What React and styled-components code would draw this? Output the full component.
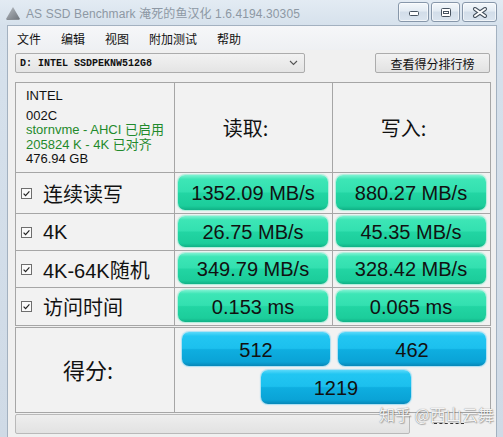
import { Fragment } from "react";
import styled, { createGlobalStyle } from "styled-components";

const Global = createGlobalStyle`
  html, body {
    margin: 0;
    padding: 0;
    background: #cfdbe8;
  }
  * { box-sizing: border-box; }
`;

const UI_FONT = `"Liberation Sans", "Noto Sans CJK SC", sans-serif`;

const Window = styled.div`
  position: relative;
  width: 503px;
  height: 437px;
  overflow: hidden;
  display: flex;
  flex-direction: column;
  background: linear-gradient(180deg, #e3ebf3 0px, #d6e1ec 26px, #cfdae6 100%);
  font-family: ${UI_FONT};
`;

const TitleBar = styled.div`
  height: 25px;
  flex: none;
  display: flex;
  align-items: center;
  padding: 0 6px 0 5px;
`;

const Title = styled.span`
  margin-left: 5px;
  font-size: 12px;
  color: #8d98a4;
  letter-spacing: 0.1px;
  flex: 1;
  white-space: nowrap;
`;

const CaptionGroup = styled.div`
  display: flex;
  gap: 2px;
  align-self: flex-start;
  margin-top: 2px;
`;

const CaptionButton = styled.div`
  width: ${(p) => p.$w}px;
  height: 20px;
  border: 1px solid #8797aa;
  border-radius: 3px;
  display: flex;
  align-items: center;
  justify-content: center;
  background: linear-gradient(180deg, #f4f8fb 0%, #e3ebf3 45%, #d2dde9 50%, #dbe5ef 100%);
  box-shadow: inset 0 0 0 1px rgba(255, 255, 255, 0.6);
`;

const Client = styled.div`
  flex: 1;
  margin: 0 6px 0 7px;
  background: #f0f0f0;
  border: 1px solid #a3b1c0;
  border-bottom: none;
  display: flex;
  flex-direction: column;
`;

const MenuBar = styled.div`
  height: 24px;
  display: flex;
  align-items: center;
  background: linear-gradient(180deg, #f6f7f9, #eef0f3);
`;

const MenuItem = styled.span`
  padding: 0 10px 0 ${(p) => (p.$first ? 9 : 10)}px;
  font-family: "Noto Sans CJK SC", sans-serif;
  font-size: 12px;
  color: #111;
`;

const Body = styled.div`
  padding: 3px 7px 0 7px;
  display: flex;
  flex-direction: column;
`;

const Toolbar = styled.div`
  display: flex;
  justify-content: space-between;
  height: 20px;
`;

const Combo = styled.div`
  width: 290px;
  height: 20px;
  border: 1px solid #acacac;
  border-radius: 2px;
  background: linear-gradient(180deg, #f2f2f2, #e4e4e4);
  display: flex;
  align-items: center;
  justify-content: space-between;
  padding: 0 6px 0 4px;
  font-family: "Liberation Mono", monospace;
  font-weight: bold;
  font-size: 10px;
  color: #111;
`;

const PushButton = styled.div`
  width: 115px;
  height: 20px;
  margin-right: -1px;
  border: 1px solid #acacac;
  border-radius: 2px;
  background: linear-gradient(180deg, #f2f2f2, #e2e2e2);
  display: flex;
  align-items: center;
  justify-content: center;
  font-family: "Noto Sans CJK SC", sans-serif;
  font-size: 12px;
  color: #111;
`;

const ResultGrid = styled.div`
  margin-top: 9px;
  display: grid;
  grid-template-columns: 158px 157px 157px;
  grid-template-rows: 89px 40px 36px 36px 37px;
  gap: 1px;
  width: 476px;
  border: 1px solid #a6a6a6;
  background: #a6a6a6;
`;

const Cell = styled.div`
  background: #f2f2f2;
  display: flex;
  align-items: center;
`;

const InfoCell = styled(Cell)`
  flex-direction: column;
  align-items: flex-start;
  padding: 6px 0 0 10px;
  font-size: 13px;
  line-height: 14.6px;
  color: #111;
`;

const InfoLine = styled.div`
  color: ${(p) => (p.$ok ? "#1f8a2c" : "#111")};
  margin-bottom: ${(p) => (p.$gap ? 5 : 0)}px;
  white-space: nowrap;
`;

const HeadCell = styled(Cell)`
  justify-content: center;
  padding-right: 16px;
  font-family: "Noto Sans CJK SC", sans-serif;
  font-size: 20px;
  color: #111;
`;

const LabelCell = styled(Cell)`
  padding-left: 5px;
  gap: 11px;
  font-family: "Liberation Sans", "Noto Sans CJK SC", sans-serif;
  font-size: 20px;
  color: #111;
`;

const BarCell = styled(Cell)`
  padding: 2px 4px 3px 3px;
  align-items: stretch;
`;

const Bar = styled.div`
  flex: ${(p) => (p.$w ? "none" : 1)};
  width: ${(p) => (p.$w ? `${p.$w}px` : "auto")};
  height: ${(p) => (p.$h ? `${p.$h}px` : "auto")};
  border-radius: 7px;
  display: flex;
  align-items: center;
  justify-content: center;
  padding-top: 2px;
  font-family: "Liberation Sans", sans-serif;
  font-size: 20px;
  color: #111;
  background: ${(p) =>
    p.$tone === "blue"
      ? "linear-gradient(180deg, #5ad9fa 0%, #22c6f2 12%, #1cc0ee 48%, #0eaee0 52%, #0aa3d6 88%, #0787b8 100%)"
      : "linear-gradient(180deg, #7ef2d2 0%, #3de6b6 12%, #33e0b0 48%, #22d5a3 52%, #1ccd9b 88%, #10b186 100%)"};
  box-shadow: ${(p) =>
    p.$tone === "blue"
      ? "0 0 1px 1px rgba(110, 210, 245, 0.55)"
      : "0 0 1px 1px rgba(120, 235, 200, 0.55)"};
`;

const ScoreBox = styled.div`
  margin-top: 1px;
  display: grid;
  grid-template-columns: 158px 315px;
  gap: 1px;
  width: 476px;
  height: 86px;
  border: 1px solid #a6a6a6;
  background: #a6a6a6;
`;

const ScoreLabel = styled(Cell)`
  justify-content: center;
  padding: 0 14px 2px 0;
  font-family: "Noto Sans CJK SC", sans-serif;
  font-size: 22px;
  color: #111;
`;

const ScoreCell = styled.div`
  background: #f2f2f2;
  display: grid;
  grid-template-columns: 148px 148px;
  grid-template-rows: 34px 34px;
  column-gap: 8px;
  row-gap: 4px;
  padding: 4px 0 0 7px;
`;

const TotalSlot = styled.div`
  grid-column: 1 / 3;
  display: flex;
  justify-content: center;
  padding-left: 4px;
`;

const Progress = styled.div`
  margin-top: 1px;
  width: 395px;
  height: 20px;
  border: 1px solid #b9b9b9;
  border-radius: 2px;
  background: linear-gradient(180deg, #eeeeee, #e2e2e2);
`;

const Watermark = styled.div`
  position: absolute;
  left: 379px;
  top: 402px;
  font-family: "Noto Sans CJK SC", sans-serif;
  font-size: 16px;
  color: rgba(255, 255, 255, 0.92);
  text-shadow: 0 0 1px rgba(80, 80, 80, 0.8), 1px 1px 1px rgba(0, 0, 0, 0.25);
  white-space: nowrap;
`;

const Dashes = styled.div`
  position: absolute;
  left: 434px;
  top: 423px;
  width: 30px;
  border-top: 1px dashed #333;
`;

const AppIcon = () => (
  <svg width="16" height="16" viewBox="0 0 16 16">
    <defs>
      <linearGradient id="ic" x1="0" y1="0" x2="1" y2="1">
        <stop offset="0" stopColor="#b9bec4" />
        <stop offset="1" stopColor="#6f757c" />
      </linearGradient>
    </defs>
    <path d="M8 2 L15 14 L1 14 Z" fill="url(#ic)" />
    <path d="M1 14 L15 14 L14 15 L2 15 Z" fill="#8a8f95" />
  </svg>
);

const MinIcon = () => (
  <svg width="12" height="10" viewBox="0 0 12 10">
    <rect x="1.5" y="4.5" width="9" height="4" rx="1" fill="#fff" stroke="#46525f" />
  </svg>
);

const MaxIcon = () => (
  <svg width="12" height="11" viewBox="0 0 12 11">
    <rect x="1.5" y="1.5" width="9" height="8" rx="1" fill="#fff" stroke="#46525f" />
    <rect x="3.5" y="4.5" width="5" height="2" fill="#fff" stroke="#46525f" />
  </svg>
);

const CloseIcon = () => (
  <svg width="16" height="11" viewBox="0 0 16 11">
    <path d="M3 2 L13 9 M13 2 L3 9" stroke="#46525f" strokeWidth="4" strokeLinecap="round" />
    <path d="M3 2 L13 9 M13 2 L3 9" stroke="#fff" strokeWidth="2" strokeLinecap="round" />
  </svg>
);

const Chevron = () => (
  <svg width="9" height="6" viewBox="0 0 9 6">
    <path d="M1 1 L4.5 4.5 L8 1" fill="none" stroke="#555" strokeWidth="1.1" />
  </svg>
);

const CheckBox = () => (
  <svg width="11" height="11" viewBox="0 0 11 11">
    <rect x="0.5" y="0.5" width="10" height="10" fill="#fafafa" stroke="#6e6e6e" />
    <path d="M2.6 5.6 L4.6 7.6 L8.4 3.4" fill="none" stroke="#222" strokeWidth="1.2" />
  </svg>
);

const rows = [
  { label: "连续读写", read: "1352.09 MB/s", write: "880.27 MB/s" },
  { label: "4K", read: "26.75 MB/s", write: "45.35 MB/s" },
  { label: "4K-64K随机", read: "349.79 MB/s", write: "328.42 MB/s" },
  { label: "访问时间", read: "0.153 ms", write: "0.065 ms" },
];

const menus = ["文件", "编辑", "视图", "附加测试", "帮助"];

export default function App() {
  return (
    <>
      <Global />
      <Window>
        <TitleBar>
          <AppIcon />
          <Title>AS SSD Benchmark 淹死的鱼汉化 1.6.4194.30305</Title>
          <CaptionGroup>
            <CaptionButton $w={31}>
              <MinIcon />
            </CaptionButton>
            <CaptionButton $w={29}>
              <MaxIcon />
            </CaptionButton>
            <CaptionButton $w={35}>
              <CloseIcon />
            </CaptionButton>
          </CaptionGroup>
        </TitleBar>

        <Client>
          <MenuBar>
            {menus.map((m, i) => (
              <MenuItem key={m} $first={i === 0}>
                {m}
              </MenuItem>
            ))}
          </MenuBar>

          <Body>
            <Toolbar>
              <Combo>
                <span>D: INTEL SSDPEKNW512G8</span>
                <Chevron />
              </Combo>
              <PushButton>查看得分排行榜</PushButton>
            </Toolbar>

            <ResultGrid>
              <InfoCell>
                <InfoLine $gap>INTEL</InfoLine>
                <InfoLine>002C</InfoLine>
                <InfoLine $ok>stornvme - AHCI 已启用</InfoLine>
                <InfoLine $ok>205824 K - 4K 已对齐</InfoLine>
                <InfoLine>476.94 GB</InfoLine>
              </InfoCell>
              <HeadCell>读取:</HeadCell>
              <HeadCell>写入:</HeadCell>

              {rows.map((r) => (
                <Fragment key={r.label}>
                  <LabelCell>
                    <CheckBox />
                    <span>{r.label}</span>
                  </LabelCell>
                  <BarCell>
                    <Bar $tone="green">{r.read}</Bar>
                  </BarCell>
                  <BarCell>
                    <Bar $tone="green">{r.write}</Bar>
                  </BarCell>
                </Fragment>
              ))}
            </ResultGrid>

            <ScoreBox>
              <ScoreLabel>得分:</ScoreLabel>
              <ScoreCell>
                <Bar $tone="blue">512</Bar>
                <Bar $tone="blue">462</Bar>
                <TotalSlot>
                  <Bar $tone="blue" $w={150} $h={34}>
                    1219
                  </Bar>
                </TotalSlot>
              </ScoreCell>
            </ScoreBox>

            <Progress />
          </Body>
        </Client>

        <Watermark>知乎 @西山云舞</Watermark>
        <Dashes />
      </Window>
    </>
  );
}
